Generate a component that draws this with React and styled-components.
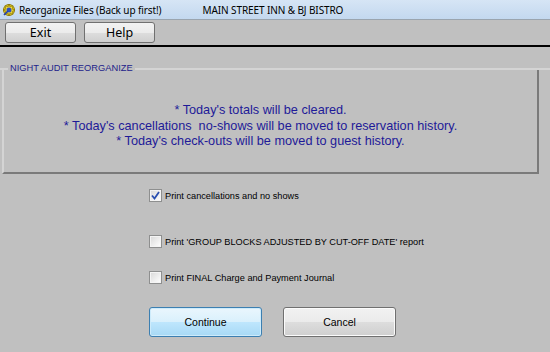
import React from 'react';
import styled, { createGlobalStyle } from 'styled-components';

const Global = createGlobalStyle`
    html, body { margin: 0; padding: 0; background: #c0c0c0; }
    * { box-sizing: border-box; }
`

const Window = styled.div`
    width: 550px;
    height: 352px;
    background: #c0c0c0;
    display: flex;
    flex-direction: column;
    overflow: hidden;
`

const TitleBar = styled.div`
    height: 20px;
    display: flex;
    align-items: center;
    padding-left: 2px;
    background: linear-gradient(180deg, #d6e5f5 0%, #c3d8ef 100%);
    border-bottom: 1px solid #9aa4ae;
    font-family: "Noto Sans", "Open Sans", sans-serif;
    font-size: 10px;
    letter-spacing: -0.1px;
    color: #000;
`

const TitleText = styled.span`
    margin-left: ${p => p.gap}px;
    white-space: nowrap;
`

const Toolbar = styled.div`
    height: 27px;
    display: flex;
    align-items: center;
    gap: 8px;
    padding: 0 0 0 5px;
    border-bottom: 2px solid #000;
`

const ToolButton = styled.button`
    width: 71px;
    height: 21px;
    padding: 0;
    border: 1px solid #707070;
    border-radius: 3px;
    background: linear-gradient(180deg, #f2f2f2 0%, #ebebeb 50%, #dddddd 51%, #cfcfcf 100%);
    font-family: "Noto Sans", "Open Sans", sans-serif;
    font-size: 12.5px;
    color: #000;
    line-height: 19px;
`

const Group = styled.div`
    position: relative;
    margin-top: 21px;
    border-top: 2px solid #d4d4d4;
`

const Legend = styled.span`
    position: absolute;
    left: 8px;
    top: -7px;
    padding: 0 2px;
    background: #c0c0c0;
    font-family: "Liberation Sans", Arial, sans-serif;
    font-size: 9.3px;
    color: #22228a;
`

const GroupBox = styled.div`
    margin-left: 2px;
    width: 537px;
    height: 104px;
    border-left: 2px solid #d4d4d4;
    border-right: 2px solid #7a7a7a;
    border-bottom: 2px solid #7a7a7a;
    display: flex;
    flex-direction: column;
    align-items: center;
    padding: 33px 20px 0 0;
`

const Message = styled.div`
    font-family: "Liberation Sans", Arial, sans-serif;
    font-size: 12.7px;
    line-height: 15.5px;
    color: #1e1a98;
    text-align: center;
    white-space: nowrap;
`

const Options = styled.div`
    display: flex;
    flex-direction: column;
    padding-left: 149px;
    margin-top: 15px;
`

const OptionRow = styled.label`
    display: flex;
    align-items: center;
    height: 13px;
    margin-bottom: ${p => p.after}px;
    font-family: "Liberation Sans", Arial, sans-serif;
    font-size: 9.2px;
    color: #000;
    white-space: nowrap;
`

const Box = styled.span`
    width: 13px;
    height: 13px;
    margin-right: 3px;
    border: 1px solid #8e8f8f;
    background: linear-gradient(135deg, #d8d8d8 0%, #f4f4f4 70%, #ffffff 100%);
    display: flex;
    align-items: center;
    justify-content: center;
    box-shadow: inset 0 0 0 1px #f4f4f4;
`

const Buttons = styled.div`
    display: flex;
    gap: 21px;
    padding-left: 149px;
    margin-top: 23px;
`

const DialogButton = styled.button`
    width: 113px;
    height: 30px;
    padding: 0;
    border-radius: 3px;
    border: 1px solid ${p => p.primary ? '#3c7fb1' : '#707070'};
    background: ${p => p.primary
        ? 'linear-gradient(180deg, #eaf6fd 0%, #d9f0fc 50%, #bee6fd 51%, #a7d9f5 100%)'
        : 'linear-gradient(180deg, #f2f2f2 0%, #ebebeb 50%, #dddddd 51%, #cfcfcf 100%)'};
    box-shadow: ${p => p.primary ? 'inset 0 0 0 1px #cdebfb' : 'inset 0 0 0 1px #fbfbfb'};
    font-family: "Liberation Sans", Arial, sans-serif;
    font-size: 10.5px;
    color: #000;
`

const AppIcon = () => (
    <svg width="14" height="14" viewBox="0 0 14 14">
        <circle cx="7" cy="7" r="5.5" fill="#e8d020" stroke="#8a7a10" strokeWidth="1" />
        <path d="M7 1 L8 4 L11 2.5 L10 6 L13 7 L10 8.5 L11 11.5 L8 10 L7 13 L6 10 L3 11.5 L4 8 L1 7 L4 6 L3 2.5 L6 4 Z" fill="#f4e040" stroke="#7a6a00" strokeWidth="0.6" />
        <circle cx="7" cy="7" r="2.5" fill="#3050c0" />
        <path d="M2 12 L6 8" stroke="#2040b0" strokeWidth="1.6" />
    </svg>
)

const Check = () => (
    <svg width="9" height="9" viewBox="0 0 9 9">
        <path d="M1 4.5 L3.5 7.5 L8 1" fill="none" stroke="#2a4fb0" strokeWidth="1.8" />
    </svg>
)

const options = [
    { text: 'Print cancellations and no shows', checked: true, after: 33 },
    { text: "Print 'GROUP BLOCKS ADJUSTED BY CUT-OFF DATE' report", checked: false, after: 23 },
    { text: 'Print FINAL Charge and Payment Journal', checked: false, after: 0 },
]

export default function App() {
    return (
        <Window>
            <Global />
            <TitleBar>
                <AppIcon />
                <TitleText gap={3}>Reorganize Files (Back up first!)</TitleText>
                <TitleText gap={41}>MAIN STREET INN &amp; BJ BISTRO</TitleText>
            </TitleBar>
            <Toolbar>
                <ToolButton>Exit</ToolButton>
                <ToolButton>Help</ToolButton>
            </Toolbar>
            <Group>
                <Legend>NIGHT AUDIT REORGANIZE</Legend>
                <GroupBox>
                    <Message>* Today's totals will be cleared.</Message>
                    <Message>* Today's cancellations&nbsp; no-shows will be moved to reservation history.</Message>
                    <Message>* Today's check-outs will be moved to guest history.</Message>
                </GroupBox>
            </Group>
            <Options>
                {options.map(o => (
                    <OptionRow key={o.text} after={o.after}>
                        <Box>{o.checked && <Check />}</Box>
                        {o.text}
                    </OptionRow>
                ))}
            </Options>
            <Buttons>
                <DialogButton primary>Continue</DialogButton>
                <DialogButton>Cancel</DialogButton>
            </Buttons>
        </Window>
    )
}
